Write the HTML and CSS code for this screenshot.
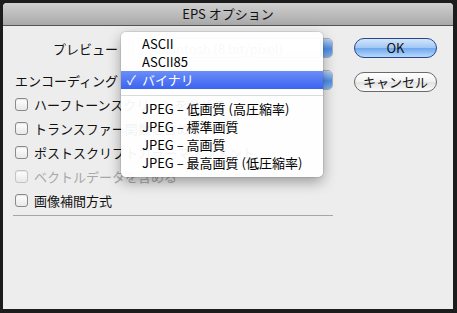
FILE: index.html
```html
<!DOCTYPE html>
<html lang="ja">
<head>
    <meta charset="UTF-8">
    <title>EPS オプション</title>
    <link rel="stylesheet" href="styles.css">
</head>
<body>
    <div class="window">
        <div class="titlebar">EPS オプション</div>
        <div class="content">
            <div class="main">
                <div class="field">
                    <span class="label">プレビュー</span>
                    <div class="popup"><span class="popup-text">Macintosh (8 bit/pixel)</span><span class="popup-cap"></span></div>
                </div>
                <div class="field">
                    <span class="label">エンコーディング</span>
                    <!-- value hidden under the open menu -->
                    <div class="popup"><span class="popup-text"></span><span class="popup-cap"></span></div>
                </div>
                <ul class="checks">
                    <li class="check"><span class="box"></span>ハーフトーンスクリーンを含める</li>
                    <li class="check"><span class="box"></span>トランスファー関数を含める</li>
                    <li class="check"><span class="box"></span>ポストスクリプトカラーマネジメント</li>
                    <li class="check disabled"><span class="box"></span>ベクトルデータを含める</li>
                    <li class="check"><span class="box"></span>画像補間方式</li>
                </ul>
                <div class="sep"></div>
            </div>
            <div class="buttons">
                <button class="btn default">OK</button>
                <button class="btn">キャンセル</button>
            </div>
        </div>

        <!-- open popup menu over the form -->
        <ul class="menu">
            <li class="item">ASCII</li>
            <li class="item">ASCII85</li>
            <li class="item selected"><span class="mark">✓</span>バイナリ</li>
            <li class="menu-sep"></li>
            <li class="item">JPEG – 低画質 (高圧縮率)</li>
            <li class="item">JPEG – 標準画質</li>
            <li class="item">JPEG – 高画質</li>
            <li class="item">JPEG – 最高画質 (低圧縮率)</li>
        </ul>
    </div>
</body>
</html>
```

FILE: styles.css
```css
/* reset */
html, body {
    height: 100%;
    margin: 0;
}
body, ul, li {
    margin: 0;
    padding: 0;
}
ul {
    list-style: none;
}
body {
    background: #1c1c1c;
    font-family: "Noto Sans CJK JP", "Noto Sans", sans-serif;
    font-size: 13px;
    color: #111;
    padding: 3px;
    box-sizing: border-box;
}

.window {
    position: relative;
    width: 450px;
    height: 306px;
    background: #ededed;
    border-radius: 4px 4px 0 0;
    overflow: hidden;
}

.titlebar {
    height: 22px;
    line-height: 22px;
    text-align: center;
    background: linear-gradient(#d0d0d0, #a9a9a9);
    border-bottom: 1px solid #555;
    color: #111;
}

.content {
    display: flex;
    padding-top: 12px;
}
.main {
    width: 330px;
}

.field {
    display: flex;
    align-items: center;
    height: 20px;
    margin-bottom: 12px;
}
.label {
    width: 115px;
    text-align: right;
    margin-right: 15px;
}
.popup {
    flex: 1;
    height: 20px;
    display: flex;
    align-items: center;
    border: 1px solid #b0b0b0;
    border-radius: 5px;
    background: linear-gradient(#fff, #e6e6e6);
    box-sizing: border-box;
    overflow: hidden;
}
.popup-text {
    flex: 1;
    padding-left: 14px;
    color: #888;
}
.popup-cap {
    width: 11px;
    height: 100%;
    background: linear-gradient(#b6d2f6, #4f8ee6 55%, #7fb3f3);
    border-left: 1px solid #5c7fb4;
}
.field:nth-child(2) {
    margin-bottom: 2px;
}

.checks {
    padding-left: 12px;
}
.check {
    height: 24px;
    display: flex;
    align-items: center;
}
.box {
    width: 11px;
    height: 11px;
    border: 1px solid #8a8a8a;
    border-radius: 3px;
    background: linear-gradient(#fff, #e8e8e8);
    margin-right: 6px;
    box-shadow: inset 0 1px 1px rgba(0, 0, 0, 0.1);
}
.check.disabled {
    color: #a8a8a8;
}
.check.disabled .box {
    border-color: #c4c4c4;
}

.sep {
    margin: 3px 0 0 10px;
    border-top: 1px solid #a6a6a6;
    height: 0;
}

.buttons {
    display: flex;
    flex-direction: column;
    padding-left: 21px;
    gap: 14px;
}
.btn {
    width: 83px;
    height: 20px;
    padding: 0;
    font-family: inherit;
    font-size: 13px;
    line-height: 18px;
    color: #111;
    border: 1px solid #6a6a6a;
    border-radius: 10px;
    background: linear-gradient(#ffffff, #f1f1f1 50%, #e2e2e2 51%, #fafafa);
}
.btn.default {
    border-color: #27468f;
    background: linear-gradient(#d3e6fb, #9fc6f4 50%, #6ea6ee 51%, #b7dafc);
}

.menu {
    position: absolute;
    left: 118px;
    top: 29px;
    width: 202px;
    padding: 3px 0 5px;
    background: rgba(255, 255, 255, 0.95);
    border-radius: 5px;
    box-shadow: 0 5px 14px rgba(0, 0, 0, 0.35), 0 0 0 1px rgba(0, 0, 0, 0.08);
}
.item {
    position: relative;
    height: 18px;
    line-height: 18px;
    padding-left: 21px;
    color: #000;
}
.item.selected {
    background: linear-gradient(#6b8ef7, #3a63f1);
    color: #fff;
}
.mark {
    position: absolute;
    left: 6px;
}
.menu-sep {
    height: 1px;
    background: #dadada;
    margin: 6px 0 4px;
}
```
